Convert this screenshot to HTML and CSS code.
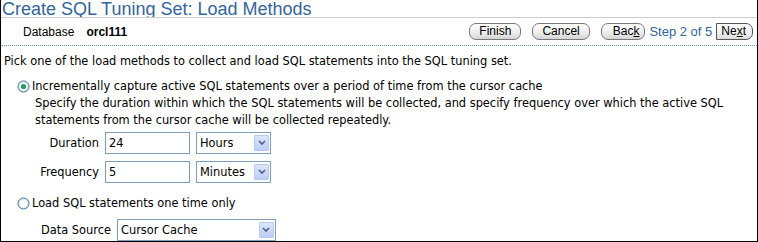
FILE: index.html
```html
<!DOCTYPE html>
<html>
<head>
<meta charset="utf-8">
<link rel="stylesheet" href="styles.css">
</head>
<body>
<div class="page">
  <h1 class="title">Create SQL Tuning Set: Load Methods</h1>
  <div class="bar">
    <div class="db"><span class="db-label">Database</span><span class="db-value">orcl111</span></div>
    <div class="actions">
      <span class="btn">Finish</span>
      <span class="btn">Cancel</span>
      <span class="btn btn-back">Bac<u>k</u></span>
      <span class="step">Step 2 of 5</span>
      <span class="btn btn-next">Ne<u>x</u>t</span>
    </div>
  </div>
  <div class="content">
    <p class="intro">Pick one of the load methods to collect and load SQL statements into the SQL tuning set.</p>
    <div class="opt">
      <svg class="radio" width="13" height="13" viewBox="0 0 13 13"><circle cx="6.5" cy="6.5" r="5.5" fill="#fff" stroke="#2f5f8f" stroke-width="1"/><circle cx="6.5" cy="6.5" r="4.3" fill="none" stroke="#dde3ea" stroke-width="1"/><circle cx="6.5" cy="6.5" r="2.6" fill="#1f9f5f"/></svg>
      <span>Incrementally capture active SQL statements over a period of time from the cursor cache</span>
    </div>
    <p class="desc">Specify the duration within which the SQL statements will be collected, and specify frequency over which the active SQL statements from the cursor cache will be collected repeatedly.</p>
    <div class="fields">
      <span class="flabel">Duration</span>
      <span class="input">24</span>
      <span class="select sel-short"><span class="sel-text">Hours</span><span class="arrow"><svg width="8" height="6" viewBox="0 0 8 6"><path d="M1 1 L4 4 L7 1" fill="none" stroke="#4d6185" stroke-width="1.6"/></svg></span></span>
      <span class="flabel">Frequency</span>
      <span class="input">5</span>
      <span class="select sel-short"><span class="sel-text">Minutes</span><span class="arrow"><svg width="8" height="6" viewBox="0 0 8 6"><path d="M1 1 L4 4 L7 1" fill="none" stroke="#4d6185" stroke-width="1.6"/></svg></span></span>
    </div>
    <div class="opt opt2">
      <svg class="radio" width="13" height="13" viewBox="0 0 13 13"><circle cx="6.5" cy="6.5" r="5.5" fill="#fff" stroke="#2f5f8f" stroke-width="1"/><circle cx="6.5" cy="6.5" r="4.3" fill="none" stroke="#dde3ea" stroke-width="1"/></svg>
      <span>Load SQL statements one time only</span>
    </div>
    <div class="source">
      <span class="flabel">Data Source</span>
      <span class="select sel-long"><span class="sel-text">Cursor Cache</span><span class="arrow"><svg width="8" height="6" viewBox="0 0 8 6"><path d="M1 1 L4 4 L7 1" fill="none" stroke="#4d6185" stroke-width="1.6"/></svg></span></span>
    </div>
  </div>
</div>
</body>
</html>
```
FILE: styles.css
```css
html, body {
  margin: 0;
  padding: 0;
  background: #fff;
}
body {
  font-family: "DejaVu Sans", "Liberation Sans", sans-serif;
  font-size: 11.4px;
  color: #000;
}
.page {
  box-sizing: border-box;
  width: 758px;
  height: 242px;
  border-left: 1px solid #000;
  border-right: 1px solid #000;
  border-bottom: 1px solid #000;
  overflow: hidden;
}
.title {
  margin: 0;
  padding: 0 0 0 1px;
  height: 18px;
  box-sizing: border-box;
  border-bottom: 1px solid #cccccc;
  font-family: "Liberation Sans", sans-serif;
  font-weight: normal;
  font-size: 18px;
  line-height: 18px;
  color: #336699;
  overflow: hidden;
  white-space: nowrap;
}
.bar {
  display: flex;
  align-items: center;
  justify-content: space-between;
  height: 28px;
  box-sizing: border-box;
  border-bottom: 1px dotted #6f9fc8;
  padding: 0 4px 0 22px;
}
.db-label { margin-right: 12px; font-size: 12px; font-family: "Liberation Sans", sans-serif; }
.db-value { font-weight: bold; font-size: 12px; font-family: "Liberation Sans", sans-serif; }
.actions {
  display: flex;
  align-items: center;
}
.btn {
  display: inline-block;
  height: 15px;
  line-height: 15px;
  padding: 0 9px;
  border: 1px solid #7a7a7a;
  border-radius: 7px;
  background: linear-gradient(#ffffff, #ececec 60%, #d4d4d4);
  font-family: "Liberation Sans", sans-serif;
  font-size: 12px;
  margin-left: 11px;
}
.btn-back { margin-left: 11px; padding: 0 5px 0 11px; }
.step {
  color: #336699;
  font-family: "Liberation Sans", sans-serif;
  font-size: 13px;
  margin: 0 4px 0 4px;
}
.btn.btn-next {
  margin-left: 0;
  padding: 0 6px 0 4px;
  border-radius: 0 7px 7px 0;
  border-color: #555;
  background: linear-gradient(#ffffff, #f0f0f0 60%, #dcdcdc);
}
.content {
  padding: 0 0 0 3px;
}
.intro {
  margin: 7px 0 0 0;
  line-height: 16px;
}
.opt {
  display: flex;
  align-items: center;
  margin: 9px 0 0 13px;
  line-height: 16px;
}
.radio { margin-right: 2px; flex: none; }
.desc {
  margin: 1px 0 0 31px;
  line-height: 17px;
  width: 715px;
}
.fields {
  display: grid;
  grid-template-columns: 95px 85px 75px;
  column-gap: 6px;
  row-gap: 7px;
  align-items: center;
  margin-top: 3px;
}
.flabel {
  text-align: right;
}
.input, .select {
  box-sizing: border-box;
  height: 22px;
  border: 1px solid #7f9db9;
  display: flex;
  align-items: center;
  padding-left: 3px;
  background: #fff;
}
.select {
  justify-content: space-between;
  padding-right: 1px;
}
.arrow {
  width: 15px;
  height: 16px;
  box-sizing: border-box;
  border: 1px solid #b6c9ef;
  border-radius: 1px;
  background: linear-gradient(#dbe6fd, #bccdf7);
  display: flex;
  align-items: center;
  justify-content: center;
}
.opt2 { margin-top: 12px; }
.source {
  display: flex;
  align-items: center;
  margin: 8px 0 0 37px;
}
.source .flabel { margin-right: 6px; }
.sel-long { width: 159px; }
```
